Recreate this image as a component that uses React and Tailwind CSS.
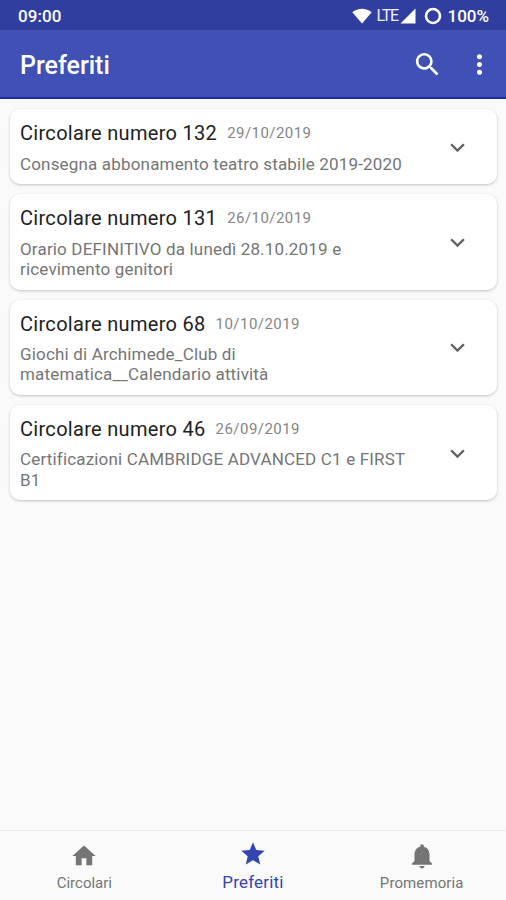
const circulars = [
    { number: 132, date: '29/10/2019', text: 'Consegna abbonamento teatro stabile 2019-2020' },
    { number: 131, date: '26/10/2019', text: 'Orario DEFINITIVO da lunedì 28.10.2019 e ricevimento genitori' },
    { number: 68, date: '10/10/2019', text: 'Giochi di Archimede_Club di matematica__Calendario attività' },
    { number: 46, date: '26/09/2019', text: 'Certificazioni CAMBRIDGE ADVANCED C1 e FIRST B1' },
];

function Icon({ d, className }) {
    return (
        <svg viewBox="0 0 24 24" fill="currentColor" className={className}>
            <path d={d} />
        </svg>
    );
}

function StatusBar() {
    return (
        <div className="h-[30px] bg-[#303f9f] flex items-center pl-[18px] pr-[17px] pt-0.5 text-white">
            <span className="text-[17px] font-medium tracking-[0.1px] leading-5">09:00</span>
            <div className="ml-auto flex items-center">
                <svg viewBox="0 0 20 16" className="w-5 h-4" fill="currentColor">
                    <path d="M0.3 4.3C5.8-0.4 14.2-0.4 19.7 4.3L10 15.6z" />
                </svg>
                <span className="ml-1 w-6 text-[16px] tracking-[-1.2px] leading-5 text-[#eef0fb]">LTE</span>
                <svg viewBox="0 0 16 16" className="w-4 h-4" fill="currentColor">
                    <path d="M15.5 0.5v15H0.5z" />
                </svg>
                <svg viewBox="0 0 18 18" className="ml-2 w-[18px] h-[18px]" fill="none" stroke="currentColor" strokeWidth="2.6">
                    <circle cx="9" cy="9" r="7" />
                </svg>
                <span className="ml-[5px] text-[17px] font-medium leading-5">100%</span>
            </div>
        </div>
    );
}

function AppBar() {
    return (
        <header className="h-[69px] bg-[#3f51b5] border-b-2 border-[#1c2ca0] flex items-center pl-5 pr-[11px] text-white">
            <h1 className="text-[25px] font-medium leading-8 pt-[5px]">Preferiti</h1>
            <Icon
                className="ml-auto mt-px w-[31px] h-[31px]"
                d="M15.5 14h-.79l-.28-.27C15.41 12.59 16 11.11 16 9.5 16 5.91 13.09 3 9.5 3S3 5.91 3 9.5 5.91 16 9.5 16c1.61 0 3.09-.59 4.23-1.57l.27.28v.79l5 4.99L20.49 19l-4.99-5zm-6 0C7.01 14 5 11.99 5 9.5S7.01 5 9.5 5 14 7.01 14 9.5 11.99 14 9.5 14z"
            />
            <Icon
                className="ml-[21px] mt-0.5 w-[31px] h-[31px]"
                d="M12 8c1.1 0 2-.9 2-2s-.9-2-2-2-2 .9-2 2 .9 2 2 2zm0 2c-1.1 0-2 .9-2 2s.9 2 2 2 2-.9 2-2-.9-2-2-2zm0 6c-1.1 0-2 .9-2 2s.9 2 2 2 2-.9 2-2-.9-2-2-2z"
            />
        </header>
    );
}

function CircularCard({ number, date, text }) {
    return (
        <article className="bg-white rounded-[10px] shadow-[0_1px_3px_rgba(0,0,0,0.22)] flex items-center pl-2.5 pr-[25px] pt-[11px] pb-[10.2px]">
            <div className="w-[400px]">
                <div className="flex items-center h-[26px]">
                    <h2 className="text-[20px] tracking-[0.3px] leading-[26px] text-[#212121]">Circolare numero {number}</h2>
                    <span className="ml-2.5 text-[15px] tracking-[0.45px] leading-5 text-[#858585]">{date}</span>
                </div>
                <p className="mt-[7.4px] text-[17px] tracking-[0.17px] leading-[20.4px] text-[#757575]">{text}</p>
            </div>
            <Icon className="ml-auto w-[29px] h-[29px] text-[#616161]" d="M16.59 8.59L12 13.17 7.41 8.59 6 10l6 6 6-6z" />
        </article>
    );
}

function BottomNav() {
    return (
        <nav className="h-[70px] border-t border-[#ececec] grid grid-cols-3 text-[#757575]">
            <div className="flex flex-col items-center pt-[11px]">
                <Icon className="w-7 h-7" d="M10 20v-6h4v6h5v-8h3L12 3 2 12h3v8z" />
                <span className="mt-[3px] text-[15px] leading-5">Circolari</span>
            </div>
            <div className="flex flex-col items-center pt-[9px] text-[#3345b0]">
                <Icon className="w-7 h-7" d="M12 17.27L18.18 21l-1.64-7.03L22 9.24l-7.19-.61L12 2 9.19 8.63 2 9.24l5.46 4.73L5.82 21z" />
                <span className="mt-1 text-[17px] leading-5 tracking-[0.2px]">Preferiti</span>
            </div>
            <div className="flex flex-col items-center pt-[10px]">
                <Icon
                    className="w-[30px] h-[30px]"
                    d="M12 22c1.1 0 2-.9 2-2h-4c0 1.1.89 2 2 2zm6-6v-5c0-3.07-1.64-5.64-4.5-6.32V4c0-.83-.67-1.5-1.5-1.5s-1.5.67-1.5 1.5v.68C7.63 5.36 6 7.92 6 11v5l-2 2v1h16v-1l-2-2z"
                />
                <span className="mt-0.5 text-[15px] leading-5 tracking-[0.1px]">Promemoria</span>
            </div>
        </nav>
    );
}

export default function App() {
    return (
        <div className="h-[900px] w-[506px] flex flex-col overflow-hidden bg-[#fafafa] font-['Roboto',sans-serif]">
            <StatusBar />
            <AppBar />
            <main className="flex-1 flex flex-col gap-[10px] pt-[10.2px] pl-[10px] pr-[9px]">
                {circulars.map((item) => (
                    <CircularCard key={item.number} {...item} />
                ))}
            </main>
            <BottomNav />
        </div>
    );
}
